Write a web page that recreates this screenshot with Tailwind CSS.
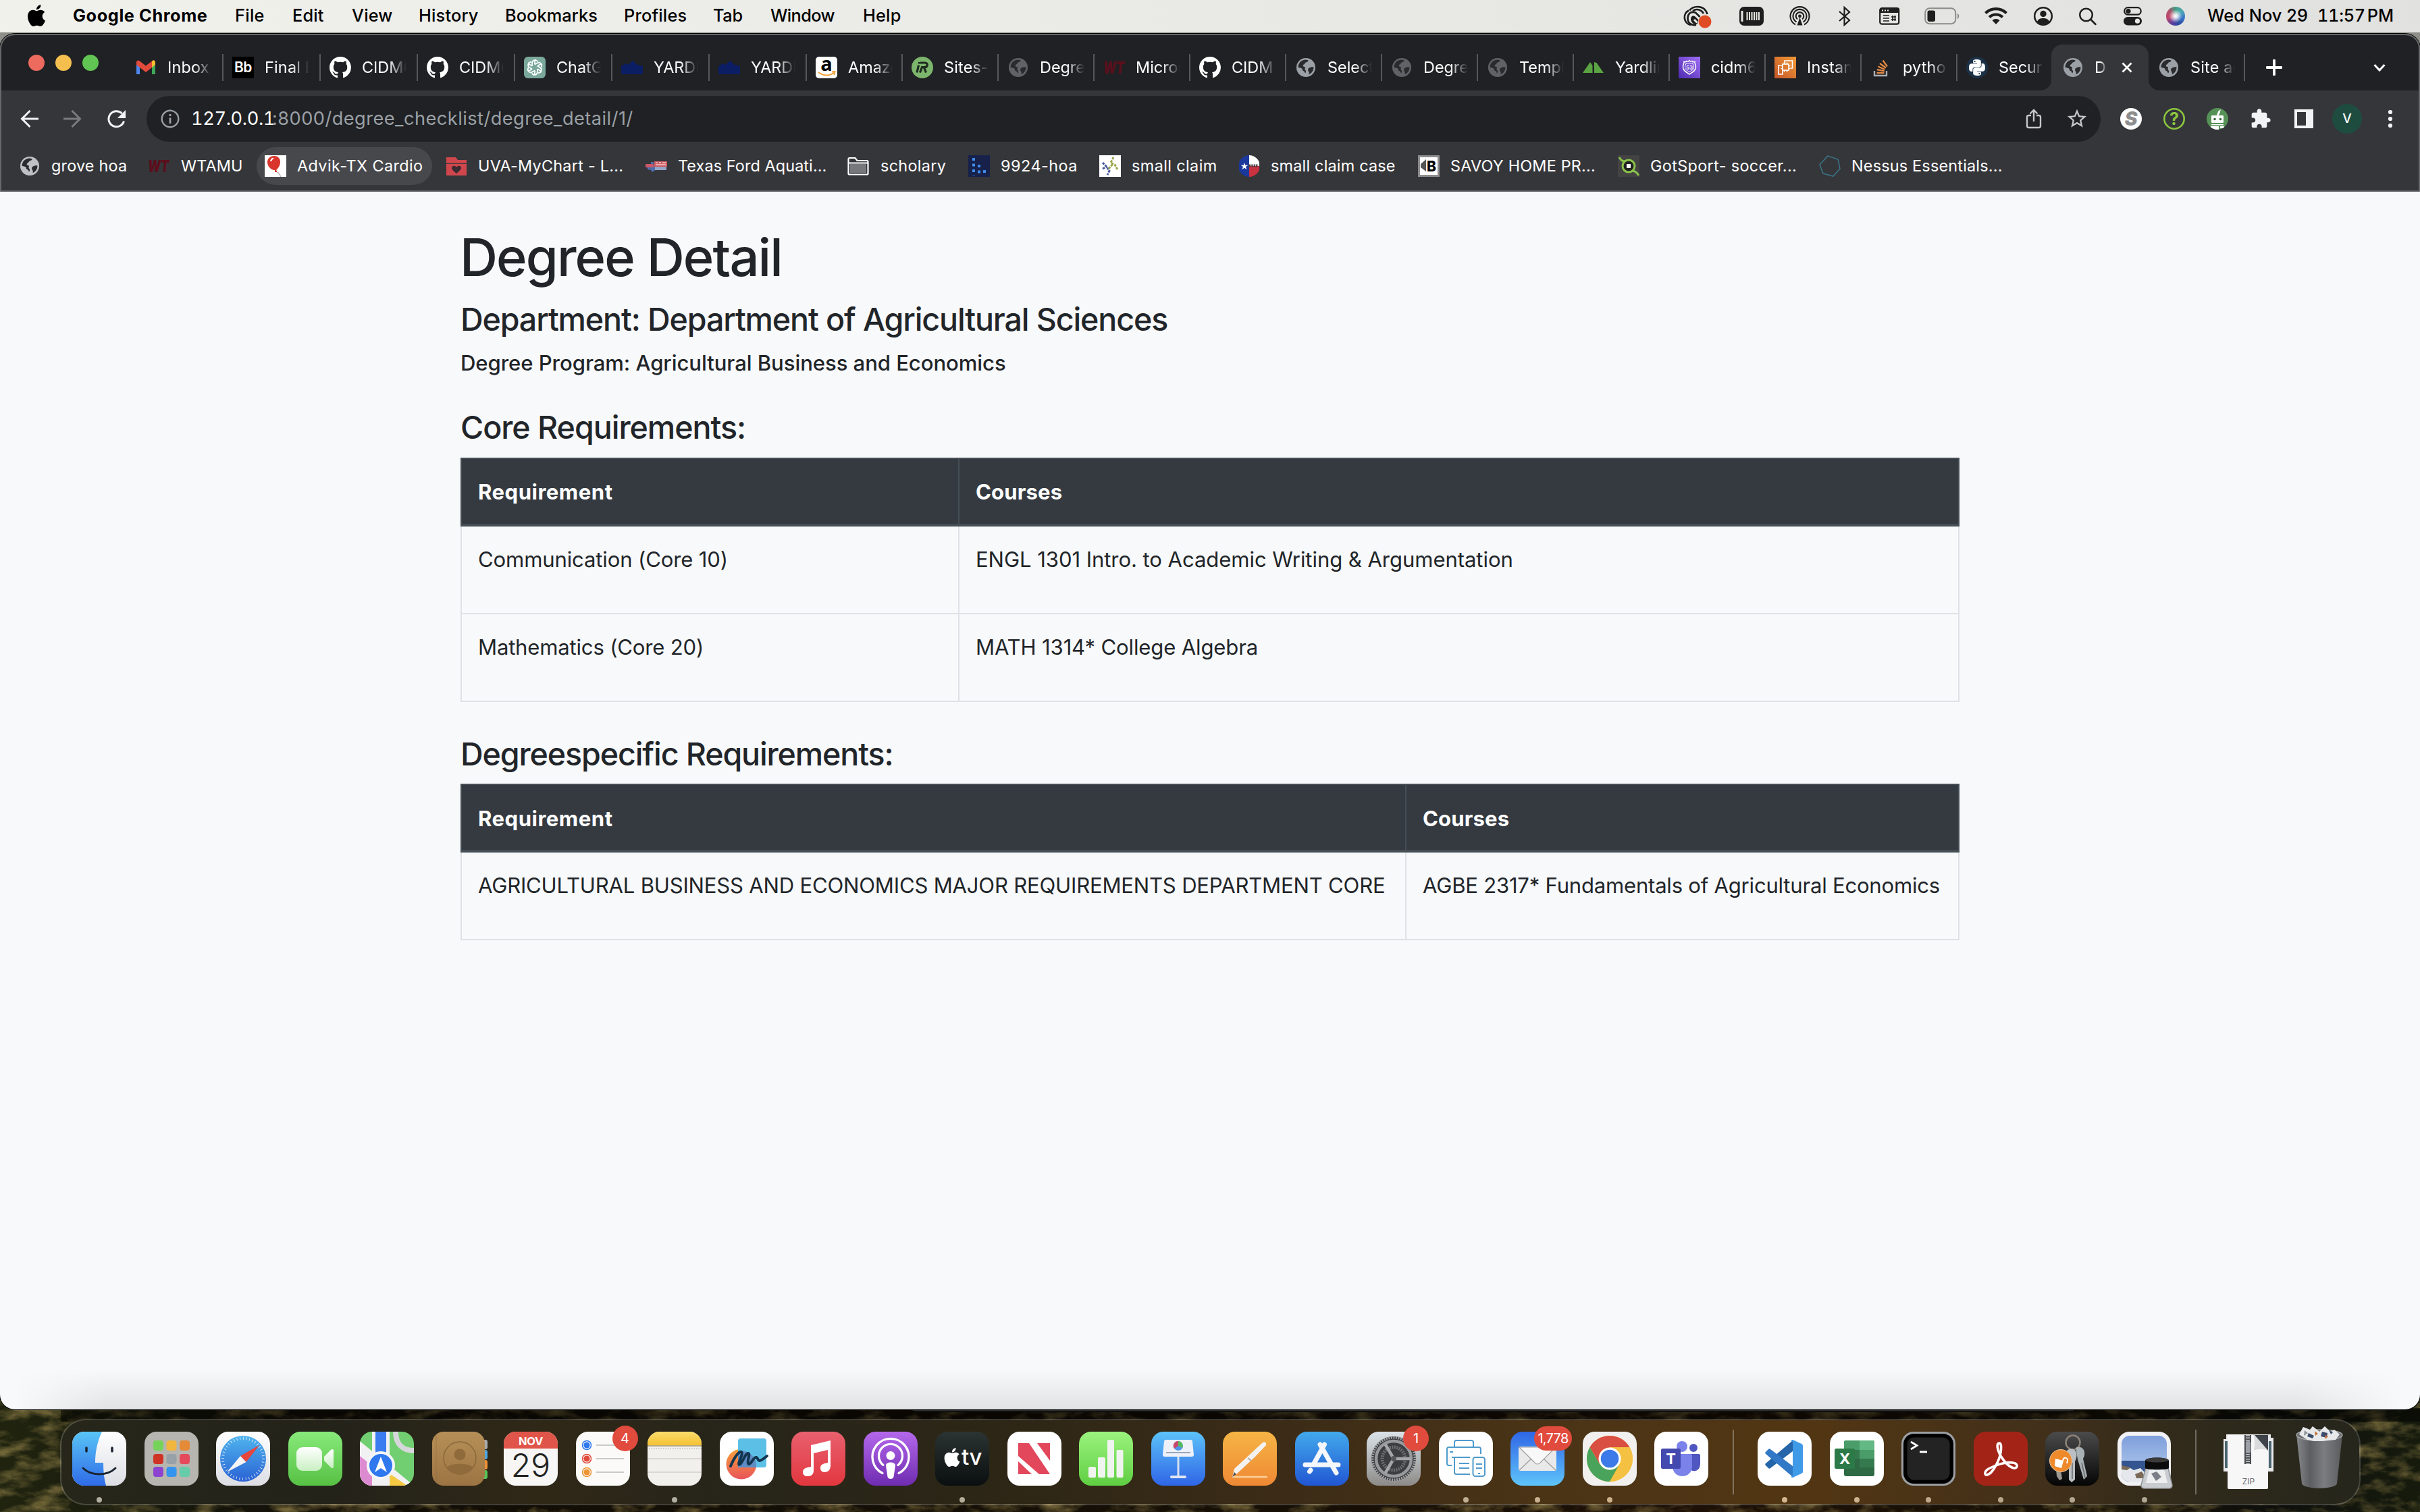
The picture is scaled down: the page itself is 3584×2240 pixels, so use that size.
<!DOCTYPE html>
<html lang="en">
<head>
<meta charset="utf-8">
<title>Degree Detail</title>
<script src="https://cdn.jsdelivr.net/npm/@tailwindcss/browser@4"></script>
</head>
<body class="relative h-[2240px] w-[3584px] overflow-hidden bg-[#0e0c06] font-['Inter',sans-serif] antialiased">

<!-- shared symbols -->
<svg class="absolute size-0">
  <defs>
    <symbol id="globe" viewBox="0 0 32 32"><circle cx="16" cy="16" r="14" fill="currentColor"/><path class="fill-[#2a2b2e]" d="M4.6 16C4.400 9.600 9.400 4.700 15.500 4.600c1.600 0 3 .3 4.100.9-.3 2.300-2.200 2-3.800 3-1.400.8-1.100 2.400-3 3.100-1.300.5-1.500 2.600 0 3.200 1 .4 1.900.2 2.200 1.200.2 1-.9 1.700-.4 3 .4 1 1.600 1.200 1.500 3 0 1.300-.6 2-1.200 2.600-.6-1.300-.4-2.300-1.700-3.200-1.500-1-2.500-1-2.500-3 0-1.600-4-2-6.100-2.400zM21 16.500c2-.9 4.600-1.500 6.500-1 0 5-2.800 9-7 10.800.4-2 .5-3-.5-4.400-1.400-1.900-1.300-4.300 1-5.400z"/></symbol>
    <symbol id="github" viewBox="0 0 16 16"><path fill="#fff" d="M8 0C3.580 0 0 3.580 0 8c0 3.540 2.290 6.530 5.470 7.590.4.070.55-.17.55-.38 0-.19-.01-.82-.01-1.490-2.010.37-2.530-.49-2.690-.94-.09-.23-.48-.94-.82-1.130-.28-.15-.68-.52-.01-.53.63-.01 1.080.58 1.230.82.72 1.210 1.870.87 2.330.66.070-.52.28-.87.51-1.070-1.780-.2-3.640-.89-3.640-3.950 0-.87.31-1.590.82-2.150-.08-.2-.36-1.020.08-2.120 0 0 .67-.21 2.200.82.64-.18 1.320-.27 2-.27s1.360.09 2 .27c1.530-1.040 2.200-.82 2.200-.82.44 1.100.16 1.920.08 2.120.51.56.82 1.270.82 2.150 0 3.070-1.870 3.750-3.650 3.950.29.25.54.73.54 1.480 0 1.070-.01 1.930-.01 2.200 0 .21.15.46.55.38A8.010 8.010 0 0 0 16 8c0-4.420-3.580-8-8-8z"/></symbol>
    <symbol id="wt" viewBox="0 0 32 32"><text x="0" y="25" font-size="25" font-weight="900" font-style="italic" fill="#5a0f1c" textLength="31" lengthAdjust="spacingAndGlyphs" font-family="Inter">WT</text></symbol>
    <symbol id="yard" viewBox="0 0 32 32"><path d="M0 12l7-4 3 2 7-6 7 6 8 2v12H0z" fill="#0b1d63" transform="translate(0 2)"/></symbol>
    <symbol id="apple" viewBox="0 0 24 24"><path fill="currentColor" d="M12.152 6.896c-.948 0-2.415-1.078-3.960-1.040-2.040.027-3.910 1.183-4.961 3.014-2.117 3.675-.546 9.103 1.519 12.090 1.013 1.454 2.208 3.090 3.792 3.039 1.520-.065 2.090-.987 3.935-.987 1.831 0 2.350.987 3.960.948 1.637-.026 2.676-1.480 3.676-2.948 1.156-1.688 1.636-3.325 1.662-3.415-.039-.013-3.182-1.221-3.220-4.857-.026-3.040 2.480-4.494 2.597-4.559-1.429-2.090-3.623-2.324-4.390-2.376-2-.156-3.675 1.090-4.610 1.090zM15.530 3.830c.843-1.012 1.400-2.427 1.245-3.830-1.207.052-2.662.805-3.532 1.818-.78.896-1.454 2.338-1.273 3.714 1.338.104 2.715-.688 3.559-1.701"/></symbol>
    <symbol id="pyhalf" viewBox="0 0 24 24"><path fill="#fff" d="M14.250.18l.9.2.73.26.59.3.45.32.34.34.25.34.16.33.1.3.04.26.02.2-.01.13V8.500l-.05.63-.13.55-.21.46-.26.38-.3.31-.33.25-.35.19-.35.14-.33.1-.3.07-.26.04-.21.02H8.770l-.69.05-.59.14-.5.22-.41.27-.33.32-.27.35-.2.36-.15.37-.1.35-.07.32-.04.27-.02.21v3.060H3.170l-.21-.03-.28-.07-.32-.12-.35-.18-.36-.26-.36-.36-.35-.46-.32-.59-.28-.73-.21-.88-.14-1.050-.05-1.230.06-1.220.16-1.040.24-.87.32-.71.36-.57.4-.44.42-.33.42-.24.4-.16.36-.1.32-.05.24-.01h.16l.06.01h8.160v-.83H6.180l-.01-2.750-.02-.37.05-.34.11-.31.17-.28.25-.26.31-.23.38-.2.44-.18.51-.15.58-.12.64-.1.71-.06.77-.04.84-.02 1.270.05zm-6.300 1.980l-.23.33-.08.41.08.41.23.34.33.22.41.09.41-.09.33-.22.23-.34.08-.41-.08-.41-.23-.33-.33-.22-.41-.09-.41.09z"/></symbol>
    <filter id="grain" x="0" y="0" width="100%" height="100%"><feTurbulence type="fractalNoise" baseFrequency="0.022 0.050" numOctaves="5" seed="11"/><feColorMatrix values="0 0 0 0 0.36  0 0 0 0 0.27  0 0 0 0 0.08  2.200 0 0 0 -0.950"/></filter>
    <linearGradient id="gWall"><stop stop-color="#20240f"/><stop offset=".09" stop-color="#15150b"/><stop offset=".14" stop-color="#120e06"/><stop offset=".5" stop-color="#150f06"/><stop offset=".7" stop-color="#1d1006"/><stop offset=".88" stop-color="#171207"/><stop offset=".94" stop-color="#0e0f0c"/><stop offset="1" stop-color="#161b0d"/></linearGradient>
    <linearGradient id="gFinder" x2="0" y2="1"><stop stop-color="#59c4f6"/><stop offset="1" stop-color="#2f6be8"/></linearGradient>
    <linearGradient id="gWhite" x2="0" y2="1"><stop stop-color="#fff"/><stop offset="1" stop-color="#dcdee4"/></linearGradient>
    <linearGradient id="gSafari" x2="0" y2="1"><stop stop-color="#4fb4ee"/><stop offset="1" stop-color="#2a62d4"/></linearGradient>
    <linearGradient id="gGreen" x2="0" y2="1"><stop stop-color="#87e97a"/><stop offset="1" stop-color="#57c144"/></linearGradient>
    <linearGradient id="gNum" x2="0" y2="1"><stop stop-color="#9bf37e"/><stop offset="1" stop-color="#5fce42"/></linearGradient>
    <linearGradient id="gCam" x2="0" y2="1"><stop stop-color="#fff"/><stop offset="1" stop-color="#c9efc2"/></linearGradient>
    <linearGradient id="gBrown" x2="0" y2="1"><stop stop-color="#b68f57"/><stop offset="1" stop-color="#9c7443"/></linearGradient>
    <linearGradient id="gRed" x2="0" y2="1"><stop stop-color="#e8606e"/><stop offset="1" stop-color="#e2373f"/></linearGradient>
    <linearGradient id="gPod" x2="0" y2="1"><stop stop-color="#b468ec"/><stop offset="1" stop-color="#6f2cb0"/></linearGradient>
    <linearGradient id="gKey" x2="0" y2="1"><stop stop-color="#5cc2fa"/><stop offset="1" stop-color="#2f65e6"/></linearGradient>
    <linearGradient id="gPages" x2="0" y2="1"><stop stop-color="#f6b545"/><stop offset="1" stop-color="#ef8834"/></linearGradient>
    <linearGradient id="gStore" x2="0" y2="1"><stop stop-color="#42a9ec"/><stop offset="1" stop-color="#2156d3"/></linearGradient>
    <linearGradient id="gSet" x2="0" y2="1"><stop stop-color="#dbe3e8"/><stop offset="1" stop-color="#8d8b89"/></linearGradient>
    <linearGradient id="gMail" x2="0" y2="1"><stop stop-color="#2f66e6"/><stop offset="1" stop-color="#5fc4fa"/></linearGradient>
    <linearGradient id="gNote" x2="0" y2="1"><stop stop-color="#fbdc6c"/><stop offset="1" stop-color="#f5c233"/></linearGradient>
    <linearGradient id="gDark" x2="0" y2="1"><stop stop-color="#4b4b4c"/><stop offset="1" stop-color="#050505"/></linearGradient>
    <linearGradient id="gCan"><stop stop-color="#85878a"/><stop offset=".3" stop-color="#5c5e61"/><stop offset=".6" stop-color="#7b7d80"/><stop offset="1" stop-color="#5a5b5d"/></linearGradient>
    <linearGradient id="gSky" x2="0" y2="1"><stop stop-color="#7f9fdb"/><stop offset="1" stop-color="#b9d0f0"/></linearGradient>
    <linearGradient id="gShield" x1="0" y1="1" x2="1" y2="0"><stop stop-color="#4d2bb0"/><stop offset="1" stop-color="#9f6df5"/></linearGradient>
    <linearGradient id="gChip" x1="0" y1="1" x2="1" y2="0"><stop stop-color="#c4562b"/><stop offset="1" stop-color="#f29a36"/></linearGradient>
    <linearGradient id="gFree" x2="0" y2="1"><stop stop-color="#f6a13a"/><stop offset="1" stop-color="#e9545a"/></linearGradient>
    <clipPath id="sq"><rect width="80" height="80" rx="18"/></clipPath>
    <clipPath id="disc"><circle cx="16" cy="16" r="16"/></clipPath>
  </defs>
</svg>

<!-- wallpaper strip visible around the dock -->
<svg class="absolute left-0 top-[2060px]" width="3584" height="180">
  <rect width="3584" height="180" fill="url(#gWall)"/>
  <rect width="3584" height="180" filter="url(#grain)" opacity=".75"/>
  <rect x="90" y="26" width="3494" height="20" fill="#000" opacity=".5"/>
</svg>
<div class="absolute left-0 top-[40px] h-[60px] w-full bg-[#8e8f88]"></div>
<div class="absolute left-[1342px] top-[2070px] h-[22px] w-[1738px] rounded-b-[16px] border-b border-black bg-[#2b2b2b]"></div>

<div class="relative flex h-full flex-col">

  <!-- menu bar -->
  <header class="flex h-12 items-start bg-linear-to-r from-[#f1f1ec] to-[#e1e1df]">
    <div class="flex h-[46px] w-full items-center text-[25.3px] font-medium text-black">
      <svg class="ml-[38px] h-8 w-8"><use href="#apple"/></svg>
      <span class="ml-[38px] w-[240px] font-bold tracking-[0.6px]">Google Chrome</span>
      <span class="w-[85px] tracking-[0.3px]">File</span>
      <span class="w-[88px] tracking-[0.2px]">Edit</span>
      <span class="w-[99px] tracking-[0.2px]">View</span>
      <span class="w-[128px] tracking-[0.2px]">History</span>
      <span class="w-[176px] tracking-[0.1px]">Bookmarks</span>
      <span class="w-[132px] tracking-[0.2px]">Profiles</span>
      <span class="w-[85px] tracking-[-0.3px]">Tab</span>
      <span class="w-[137px] tracking-[-0.6px]">Window</span>
      <span class="tracking-[0.2px]">Help</span>
      <svg class="absolute left-[2492px] top-[6px]" width="44" height="38" viewBox="0 0 44 38"><g fill="none" stroke="#1e1e1e" stroke-width="2.700"><path d="M12 31a11.500 11.500 0 0 1-3-21.500M10 9.500C13 5.500 17 4 22 4c7 0 12.500 4 14.500 11"/><path d="M20 31c-7 1-12.500-3-12.500-9.500C7.500 13 14 10 19.500 13l6 6"/><path d="M15 10c6-4 13-1.500 16 4"/></g><path d="M12 22c0-4 3.500-6 6.500-3.500l5 5-2 6.500c-5 1-9.500-3-9.500-8z" fill="#1e1e1e"/><path d="M17 23l4.500 4.500" stroke="#e8e8e3" stroke-width="3"/><circle cx="33" cy="26" r="9.500" fill="#e04c23"/></svg>
      <svg class="absolute left-[2576px] top-[10px]" width="36" height="28"><rect width="36" height="28" rx="7" fill="#1e1e1e"/><path d="M4 6v16" stroke="#e8e8e3" stroke-width="3"/><path d="M11.500 8v12M15 8v12M18.500 8v12M22 8v12M25.500 8v12M29 8v12" stroke="#e8e8e3" stroke-width="2"/></svg>
      <svg class="absolute left-[2650px] top-[9px]" width="31" height="30" fill="none" stroke="#1e1e1e" stroke-width="2.100"><path d="M9 27.500a14 14 0 1 1 13 0M10.500 23.500a10 10 0 1 1 10 0M12 19.500a5.800 5.800 0 1 1 7 0"/><circle cx="15.500" cy="15" r="2.400" fill="#1e1e1e" stroke="none"/><path d="M15.500 17l-4 11.500h8z" fill="#1e1e1e" stroke="none"/></svg>
      <svg class="absolute left-[2722px] top-[9px]" width="20" height="30" fill="none" stroke="#1e1e1e" stroke-width="2.200"><path d="M2 8l15 13-7.500 7V2L17 9 2 22"/></svg>
      <svg class="absolute left-[2783px] top-[11px]" width="31" height="26"><rect x="1.200" y="1.200" width="28" height="23.500" rx="3" fill="none" stroke="#1e1e1e" stroke-width="2.200"/><path d="M1 3a2 2 0 0 1 2-2h25a2 2 0 0 1 2 2v5H1z" fill="#1e1e1e"/><path d="M6 12h9M6 16h9M6 20h9M18 14h7M18 18h7M20 12v8M23.500 12v8" stroke="#1e1e1e" stroke-width="1.700"/><path d="M4 4.500h2M8 4.500h2M12 4.500h2" stroke="#e8e8e3" stroke-width="2"/></svg>
      <svg class="absolute left-[2850px] top-[11px]" width="54" height="26"><rect x="1.200" y="1.200" width="45" height="23" rx="6.500" fill="none" stroke="#8b8b88" stroke-width="2"/><rect x="4.500" y="4.500" width="11.500" height="16.500" rx="3" fill="#1e1e1e"/><path d="M49 9v8c3-1 3-7 0-8z" fill="#8b8b88"/></svg>
      <svg class="absolute left-[2938px] top-[10px]" width="36" height="27" fill="none" stroke="#1e1e1e" stroke-width="4.200"><path d="M2.500 9.500a22 22 0 0 1 31 0M8.200 15.500a14 14 0 0 1 19.600 0"/><path d="M18 26l-5.500-5.800a8 8 0 0 1 11 0z" fill="#1e1e1e" stroke="none"/></svg>
      <svg class="absolute left-[3011px] top-[9px]" width="30" height="30"><circle cx="15" cy="15" r="12.800" fill="none" stroke="#1e1e1e" stroke-width="2.500"/><circle cx="15" cy="11.500" r="4.700" fill="#1e1e1e"/><path d="M6 23c1.500-4 5-5 9-5s7.500 1 9 5a12 12 0 0 1-18 0z" fill="#1e1e1e"/></svg>
      <svg class="absolute left-[3078px] top-[11px]" width="28" height="28" fill="none" stroke="#1e1e1e" stroke-width="2.500" stroke-linecap="round"><circle cx="11.500" cy="11" r="9.300"/><path d="M18.500 18l7 7"/></svg>
      <svg class="absolute left-[3145px] top-[10px]" width="27" height="28"><rect x="1.200" y="1.200" width="24.500" height="10.500" rx="5.200" fill="none" stroke="#1e1e1e" stroke-width="2.200"/><circle cx="7" cy="6.500" r="3.600" fill="#1e1e1e"/><rect y="15" width="27" height="12.500" rx="6.200" fill="#1e1e1e"/><circle cx="20.500" cy="21.200" r="3.600" fill="#e8e8e3"/></svg>
      <div class="absolute left-[3208px] top-[10px] size-[28px] rounded-full bg-[radial-gradient(circle_at_50%_50%,#fff_0,#ffffffcc_15%,transparent_50%),conic-gradient(#3f9e82,#4fa8b4,#3a78c8,#2a4ba0,#5a3fa0,#c0456a,#b0506a,#3f9e82)]"></div>
      <span class="absolute left-[3269px] tracking-[0.1px]">Wed Nov 29</span>
      <span class="absolute left-[3432px] tracking-[-0.3px] tabular-nums">11:57<span class="pl-[3px] tracking-normal">PM</span></span>
    </div>
  </header>

  <!-- browser window -->
  <main class="relative mt-[2px] flex h-[2038px] flex-col overflow-hidden rounded-[22px] bg-[#f8f9fb] shadow-[0_0_0_1px_#000]">

    <!-- tab strip -->
    <div class="flex h-[84px] items-end bg-[#202124] text-[23.4px] text-white">
      <div class="flex h-[68px] w-[187px] items-start gap-[16px] pl-[42px] pt-[15px]">
        <i class="size-[24px] rounded-full bg-[#ec6a5e]"></i><i class="size-[24px] rounded-full bg-[#f4bf4f]"></i><i class="size-[24px] rounded-full bg-[#61c554]"></i>
      </div>
      <div class="flex h-[68px] w-[144px] items-center pl-[13px]">
        <svg class="size-8 shrink-0" viewBox="0 0 32 32"><path d="M2 26V8l5 4v14z" fill="#4c86ee"/><path d="M30 26V8l-5 4v14z" fill="#3fa757"/><path d="M2 8.500c0-3 3-4 5-2l9 7 9-7V16l-9 7-9-7-5-4z" fill="#e24a3c"/><path d="M25 6.500c3-2.500 5-.5 5 2V12l-5 4z" fill="#f5bd2f"/></svg>
        <span class="ml-4 w-[66px] overflow-hidden whitespace-nowrap [mask-image:linear-gradient(to_right,#000_60%,transparent)] tracking-[0.2px]">Inbox (4)</span><i class="ml-auto h-10 w-[2px] bg-[#55575b]"></i></div>
      <div class="flex h-[68px] w-[144px] items-center pl-[13px]">
        <div class="flex size-8 shrink-0 items-center justify-center bg-black text-[21px] font-semibold tracking-[-0.5px]">Bb</div>
        <span class="ml-4 w-[66px] overflow-hidden whitespace-nowrap [mask-image:linear-gradient(to_right,#000_60%,transparent)] tracking-[0.2px]">Final E</span><i class="ml-auto h-10 w-[2px] bg-[#55575b]"></i></div>
      <div class="flex h-[68px] w-[144px] items-center pl-[13px]"><svg class="size-8 shrink-0"><use href="#github"/></svg>
        <span class="ml-4 w-[66px] overflow-hidden whitespace-nowrap [mask-image:linear-gradient(to_right,#000_60%,transparent)]">CIDM6</span><i class="ml-auto h-10 w-[2px] bg-[#55575b]"></i></div>
      <div class="flex h-[68px] w-[144px] items-center pl-[13px]"><svg class="size-8 shrink-0"><use href="#github"/></svg>
        <span class="ml-4 w-[66px] overflow-hidden whitespace-nowrap [mask-image:linear-gradient(to_right,#000_60%,transparent)]">CIDM6</span><i class="ml-auto h-10 w-[2px] bg-[#55575b]"></i></div>
      <div class="flex h-[68px] w-[144px] items-center pl-[13px]">
        <svg class="size-8 shrink-0" viewBox="0 0 32 32"><rect width="32" height="32" rx="6" fill="#7aa99c"/><g fill="none" stroke="#fff" stroke-width="1.700"><path id="lp" d="M16 11.500l4-2.300c4-2 8 2.500 5.500 6.500M16 11.500v-4.500c0-1.500 1-2 2-2.500"/><use href="#lp" transform="rotate(60 16 16)"/><use href="#lp" transform="rotate(120 16 16)"/><use href="#lp" transform="rotate(180 16 16)"/><use href="#lp" transform="rotate(240 16 16)"/><use href="#lp" transform="rotate(300 16 16)"/></g></svg>
        <span class="ml-4 w-[66px] overflow-hidden whitespace-nowrap [mask-image:linear-gradient(to_right,#000_60%,transparent)]">ChatG</span><i class="ml-auto h-10 w-[2px] bg-[#55575b]"></i></div>
      <div class="flex h-[68px] w-[144px] items-center pl-[13px]"><svg class="size-8 shrink-0"><use href="#yard"/></svg>
        <span class="ml-4 w-[66px] overflow-hidden whitespace-nowrap [mask-image:linear-gradient(to_right,#000_60%,transparent)]">YARDI</span><i class="ml-auto h-10 w-[2px] bg-[#55575b]"></i></div>
      <div class="flex h-[68px] w-[144px] items-center pl-[13px]"><svg class="size-8 shrink-0"><use href="#yard"/></svg>
        <span class="ml-4 w-[66px] overflow-hidden whitespace-nowrap [mask-image:linear-gradient(to_right,#000_60%,transparent)]">YARDI</span><i class="ml-auto h-10 w-[2px] bg-[#55575b]"></i></div>
      <div class="flex h-[68px] w-[142px] items-center pl-[13px]">
        <svg class="size-8 shrink-0" viewBox="0 0 32 32"><rect width="32" height="32" rx="5" fill="#fff"/><text x="16" y="21" text-anchor="middle" font-size="29" font-weight="700" font-family="Open Sans">a</text><path d="M4 23c7 5.500 16 6 23 1M24 22.500l4.500-.5-1 5" fill="none" stroke="#f2a33a" stroke-width="2"/></svg>
        <span class="ml-4 w-[66px] overflow-hidden whitespace-nowrap [mask-image:linear-gradient(to_right,#000_60%,transparent)]">Amazo</span><i class="ml-auto h-10 w-[2px] bg-[#55575b]"></i></div>
      <div class="flex h-[68px] w-[142px] items-center pl-[13px]">
        <svg class="size-8 shrink-0" viewBox="0 0 32 32"><circle cx="16" cy="16" r="16" fill="#7cb66c"/><path d="M8 23.500l2.500-11M11 10.500l.5-2.500M12.500 9H20c5 0 4 6.500-.5 6.500h-4l-3 8M18.500 16l3 7.500" fill="none" stroke="#1f2a20" stroke-width="3.200"/></svg>
        <span class="ml-4 w-[66px] overflow-hidden whitespace-nowrap [mask-image:linear-gradient(to_right,#000_60%,transparent)] tracking-[0.2px]">Sites-</span><i class="ml-auto h-10 w-[2px] bg-[#55575b]"></i></div>
      <div class="flex h-[68px] w-[142px] items-center pl-[13px]"><svg class="size-8 shrink-0 text-[#5f6368]"><use href="#globe"/></svg>
        <span class="ml-4 w-[66px] overflow-hidden whitespace-nowrap [mask-image:linear-gradient(to_right,#000_60%,transparent)]">Degree</span><i class="ml-auto h-10 w-[2px] bg-[#55575b]"></i></div>
      <div class="flex h-[68px] w-[142px] items-center pl-[13px]"><svg class="size-8 shrink-0"><use href="#wt"/></svg>
        <span class="ml-4 w-[66px] overflow-hidden whitespace-nowrap [mask-image:linear-gradient(to_right,#000_60%,transparent)]">Micros</span><i class="ml-auto h-10 w-[2px] bg-[#55575b]"></i></div>
      <div class="flex h-[68px] w-[142px] items-center pl-[13px]"><svg class="size-8 shrink-0"><use href="#github"/></svg>
        <span class="ml-4 w-[66px] overflow-hidden whitespace-nowrap [mask-image:linear-gradient(to_right,#000_60%,transparent)]">CIDM</span><i class="ml-auto h-10 w-[2px] bg-[#55575b]"></i></div>
      <div class="flex h-[68px] w-[142px] items-center pl-[13px]"><svg class="size-8 shrink-0 text-[#9aa0a6]"><use href="#globe"/></svg>
        <span class="ml-4 w-[66px] overflow-hidden whitespace-nowrap [mask-image:linear-gradient(to_right,#000_60%,transparent)]">Select</span><i class="ml-auto h-10 w-[2px] bg-[#55575b]"></i></div>
      <div class="flex h-[68px] w-[142px] items-center pl-[13px]"><svg class="size-8 shrink-0 text-[#5f6368]"><use href="#globe"/></svg>
        <span class="ml-4 w-[66px] overflow-hidden whitespace-nowrap [mask-image:linear-gradient(to_right,#000_60%,transparent)]">Degree</span><i class="ml-auto h-10 w-[2px] bg-[#55575b]"></i></div>
      <div class="flex h-[68px] w-[142px] items-center pl-[13px]"><svg class="size-8 shrink-0 text-[#5f6368]"><use href="#globe"/></svg>
        <span class="ml-4 w-[66px] overflow-hidden whitespace-nowrap [mask-image:linear-gradient(to_right,#000_60%,transparent)]">Templ</span><i class="ml-auto h-10 w-[2px] bg-[#55575b]"></i></div>
      <div class="flex h-[68px] w-[142px] items-center pl-[13px]"><svg class="size-8 shrink-0" viewBox="0 0 32 32"><path d="M0 24L11 8l3.500 5V24zM17 24V8l3.500 1L31 24z" fill="#5aa443"/></svg>
        <span class="ml-4 w-[66px] overflow-hidden whitespace-nowrap [mask-image:linear-gradient(to_right,#000_60%,transparent)]">Yardlin</span><i class="ml-auto h-10 w-[2px] bg-[#55575b]"></i></div>
      <div class="flex h-[68px] w-[142px] items-center pl-[13px]"><svg class="size-8 shrink-0" viewBox="0 0 32 32"><rect width="32" height="32" fill="url(#gShield)"/><g fill="none" stroke="#fff" stroke-width="1.500"><path d="M8 7.500c2 .8 3 .5 4-1 1.500 1 2.500 1 4-1 1.500 2 2.500 2 4 1 1 1.500 2 1.800 4 1-.5 2 1.500 4 1.500 8 0 5-5 7.500-9.500 10.500C11.500 23 6.500 20.500 6.500 15.500c0-4 2-6 1.500-8z"/><path d="M11 9.500h10c0 2 1.500 3 1.500 6 0 4-3.500 5-6.500 7.500-3-2.500-6.500-3.500-6.500-7.500 0-3 1.500-4 1.500-6z" stroke-width="1"/></g><text x="16" y="19" text-anchor="middle" font-size="8" font-weight="600" fill="#fff" font-family="Inter">53</text></svg>
        <span class="ml-4 w-[66px] overflow-hidden whitespace-nowrap [mask-image:linear-gradient(to_right,#000_60%,transparent)]">cidm6</span><i class="ml-auto h-10 w-[2px] bg-[#55575b]"></i></div>
      <div class="flex h-[68px] w-[142px] items-center pl-[13px]"><svg class="size-8 shrink-0" viewBox="0 0 32 32"><rect width="32" height="32" fill="url(#gChip)"/><g fill="none" stroke="#fff" stroke-width="1.600"><path d="M12 19v7H6V13h3M15 9V6h11.500v11h-3"/><rect x="12" y="11" width="9" height="9"/><path d="M14.500 11V8.500M18.500 11V8.500M14.500 20v2.500M18.500 20v2.500M12 13.500H9.500M12 17.500H9.500M21 13.500h2.500M21 17.500h2.500"/></g></svg>
        <span class="ml-4 w-[66px] overflow-hidden whitespace-nowrap [mask-image:linear-gradient(to_right,#000_60%,transparent)] tracking-[0.2px]">Instan</span><i class="ml-auto h-10 w-[2px] bg-[#55575b]"></i></div>
      <div class="flex h-[68px] w-[142px] items-center pl-[13px]"><svg class="size-8 shrink-0" viewBox="0 0 32 32" fill="none"><path d="M6 21v7h18v-7" stroke="#a9adb2" stroke-width="2.400"/><path d="M9.500 24h11M9.800 19.200l11 2M11.300 14.500l10 4.200M14 10l9 6.500M18.500 5.500l6.500 9" stroke="#e58a45" stroke-width="2.300"/></svg>
        <span class="ml-4 w-[66px] overflow-hidden whitespace-nowrap [mask-image:linear-gradient(to_right,#000_60%,transparent)] tracking-[0.2px]">python</span><i class="ml-auto h-10 w-[2px] bg-[#55575b]"></i></div>
      <div class="flex h-[68px] w-[142px] items-center pl-[13px]"><svg class="size-8 shrink-0" viewBox="0 0 32 32"><circle cx="16" cy="16" r="16" fill="#1c3145"/><use href="#pyhalf" x="4" y="4" width="24" height="24"/><use href="#pyhalf" x="4" y="4" width="24" height="24" transform="rotate(180 16 16)"/></svg>
        <span class="ml-4 w-[66px] overflow-hidden whitespace-nowrap [mask-image:linear-gradient(to_right,#000_60%,transparent)]">Securi</span></div>
      <div class="relative -ml-[3px] flex h-[68px] w-[144px] items-center rounded-t-[16px] bg-[#35363a] pl-4">
        <svg class="absolute -left-[16px] bottom-0 size-4 text-[#35363a]" viewBox="0 0 16 16"><path d="M16 0v16H0A16 16 0 0 0 16 0z" fill="currentColor"/></svg>
        <svg class="absolute -right-[16px] bottom-0 size-4 text-[#35363a]" viewBox="0 0 16 16"><path d="M0 0v16h16A16 16 0 0 1 0 0z" fill="currentColor"/></svg>
        <svg class="size-8 shrink-0 text-[#9aa0a6]"><use href="#globe"/></svg>
        <span class="ml-4 w-[18px] overflow-hidden whitespace-nowrap [mask-image:linear-gradient(to_right,#000_50%,transparent)]">De</span>
        <svg class="ml-[21px] size-[18px]" viewBox="0 0 18 18"><path d="M2.500 2.500l13 13M15.500 2.500l-13 13" stroke="#fff" stroke-width="2.800"/></svg>
      </div>
      <div class="flex h-[68px] w-[143px] items-center pl-[14px]"><svg class="size-8 shrink-0 text-[#9aa0a6]"><use href="#globe"/></svg>
        <span class="ml-4 w-[66px] overflow-hidden whitespace-nowrap [mask-image:linear-gradient(to_right,#000_60%,transparent)] tracking-[0.2px]">Site ad</span><i class="ml-auto h-10 w-[2px] bg-[#55575b]"></i></div>
      <svg class="mb-[22px] ml-[31px] size-6" viewBox="0 0 24 24"><path d="M12 1.500v21M1.500 12h21" stroke="#fff" stroke-width="3.800" stroke-linecap="round"/></svg>
      <svg class="mb-[26px] ml-auto mr-[50px] h-4 w-5" viewBox="0 0 20 16"><path d="M2.500 4l7.500 8 7.500-8" fill="none" stroke="#fff" stroke-width="3"/></svg>
    </div>

    <!-- toolbar -->
    <div class="flex h-[76px] items-end bg-[#35363a]">
      <div class="flex h-[68px] w-full items-center">
        <svg class="ml-[28px] size-8" viewBox="0 0 32 32" fill="none" stroke="#f1f3f4" stroke-width="3"><path d="M29 16H5M16.500 4L4.500 16l12 12"/></svg>
        <svg class="ml-[31px] size-8" viewBox="0 0 32 32" fill="none" stroke="#797b7f" stroke-width="3"><path d="M3 16h24M15.500 4l12 12-12 12"/></svg>
        <svg class="ml-[33px] size-8" viewBox="0 0 32 32" fill="none"><path d="M27.500 19.500A11.500 11.500 0 1 1 24.500 8" stroke="#f1f3f4" stroke-width="3"/><path d="M30 3v12H18z" fill="#f1f3f4"/></svg>
        <div class="ml-[29px] flex h-[68px] w-[2894px] items-center rounded-full bg-[#202124] text-[27.2px] text-[#9aa0a6]">
          <svg class="ml-[21px] size-7" viewBox="0 0 28 28" fill="none" stroke="#9aa0a6" stroke-width="2.400"><circle cx="14" cy="14" r="12.300"/><path d="M14 12.500V21M14 7v3" stroke-width="2.800"/></svg>
          <span class="ml-[17px] w-[120px] tracking-[-0.4px] tabular-nums text-white">127.0.0.1</span><span class="tracking-[0.46px]">:8000/degree_checklist/degree_detail/1/</span>
          <svg class="ml-auto h-[32px] w-[24px]" viewBox="0 0 24 32" fill="none" stroke="#c4c7cb" stroke-width="2.400"><path d="M8 11H4.500a2.500 2.500 0 0 0-2.500 2.500v13A2.500 2.500 0 0 0 4.500 29h15a2.500 2.500 0 0 0 2.500-2.500v-13a2.500 2.500 0 0 0-2.500-2.500H16M12 20V3M6.500 8.500L12 3l5.500 5.500"/></svg>
          <svg class="ml-[35px] mr-[18px] size-[34px]" viewBox="0 0 24 24" fill="#c4c7cb"><path d="M22 9.240l-7.190-.62L12 2 9.190 8.630 2 9.240l5.460 4.730L5.820 21 12 17.270 18.180 21l-1.630-7.030L22 9.240zM12 15.400l-3.760 2.270 1-4.280-3.320-2.880 4.380-.38L12 6.100l1.710 4.040 4.380.38-3.320 2.880 1 4.280L12 15.400z"/></svg>
        </div>
        <svg class="ml-[29px] size-8" viewBox="0 0 32 32"><circle cx="16" cy="16" r="16" fill="#fff"/><text x="16" y="26" text-anchor="middle" font-size="28" font-weight="900" font-style="italic" fill="#8e8e8e" font-family="Inter">S</text></svg>
        <svg class="ml-8 size-8" viewBox="0 0 32 32"><circle cx="16" cy="16" r="14.700" fill="none" stroke="#8cc63f" stroke-width="2.600"/><text x="16" y="25" text-anchor="middle" font-size="25" font-weight="700" fill="#8cc63f" font-family="Inter">?</text></svg>
        <svg class="ml-8 size-8" viewBox="0 0 32 32"><circle cx="16" cy="16" r="16" fill="#569257"/><g clip-path="url(#disc)" fill="#fff"><rect x="7" y="11" width="18" height="11" rx="1"/><path d="M15 11l2-6 4-3-2 7-2 2z"/><path d="M7 24h18v1.500H7zM6 27h12v5H6zM20 27h6v3h-6z"/></g><circle cx="12" cy="16.500" r="1.800" fill="#37683a"/><circle cx="20.500" cy="16.500" r="1.800" fill="#37683a"/></svg>
        <svg class="ml-8 size-8" viewBox="0 0 24 24"><path fill="#f1f3f4" d="M20.500 11H19V7c0-1.100-.9-2-2-2h-4V3.500C13 2.120 11.880 1 10.500 1S8 2.120 8 3.500V5H4c-1.100 0-1.990.9-1.990 2v3.800H3.500c1.490 0 2.700 1.210 2.700 2.700s-1.210 2.700-2.700 2.700H2V20c0 1.100.9 2 2 2h3.800v-1.500c0-1.490 1.210-2.700 2.700-2.700 1.490 0 2.700 1.210 2.700 2.700V22H17c1.100 0 2-.9 2-2v-4h1.500c1.380 0 2.500-1.120 2.500-2.500S21.880 11 20.500 11z"/></svg>
        <svg class="ml-8 size-8" viewBox="0 0 32 32"><path fill="#f1f3f4" fill-rule="evenodd" d="M2 2h28v28H2zM6 6v20h13V6z"/></svg>
        <div class="ml-[26px] flex size-[44px] items-center justify-center rounded-full bg-[#1e4d3f] text-[19px] font-medium text-white">V</div>
        <svg class="ml-[26px] size-8" viewBox="0 0 32 32" fill="#f1f3f4"><circle cx="16" cy="6" r="3.100"/><circle cx="16" cy="16" r="3.100"/><circle cx="16" cy="26" r="3.100"/></svg>
      </div>
    </div>

    <!-- bookmarks bar -->
    <div class="flex h-[74px] items-center border-b-2 border-[#5b5d60] bg-[#35363a] pl-[28px] text-[23.4px] text-white whitespace-nowrap">
      <div class="flex w-[191px] items-center gap-4"><svg class="size-8 text-[#bdc1c6]"><use href="#globe"/></svg><span class="tracking-[0.2px]">grove hoa</span></div>
      <div class="flex w-[161px] items-center gap-[17px]"><svg class="size-8"><use href="#wt"/></svg><span class="tracking-[0.15px]">WTAMU</span></div>
      <div class="mr-5 flex h-14 w-[260px] items-center gap-4 rounded-full bg-[#47484c] pl-3"><svg class="size-8" viewBox="0 0 32 32"><rect width="32" height="32" fill="#fff"/><path d="M14 1c6 0 9 4 9 9 0 6-4 10-6 12l2 3h-4v-3C9 22 4 16 4 10 4 5 8 1 14 1z" fill="#d9352c"/><path d="M9 9c.5-2.500 2-4 4-4.500" stroke="#fff" stroke-width="2" fill="none"/><path d="M18 25c4 1 4 4 6 7" stroke="#c4b6b6" stroke-width="1.500" fill="none"/></svg><span class="tracking-[0.4px]">Advik-TX Cardio</span></div>
      <div class="flex w-[296px] items-center gap-4"><svg class="size-8" viewBox="0 0 32 32"><path d="M1 3h14l3 4h13v5H1zM1 13h30v16a1 1 0 0 1-1 1H2a1 1 0 0 1-1-1z" fill="#cf474d"/><path d="M16 27c-5-4-7-6-7-8.500 0-3 4.500-4 7-1 2.500-3 7-2 7 1 0 2.500-2 4.500-7 8.500z" fill="#3a2b31"/></svg><span class="tracking-[0.25px]">UVA-MyChart - L...</span></div>
      <div class="flex w-[299px] items-center gap-4"><svg class="size-8" viewBox="0 0 32 32"><path d="M0 13h8v-3h4v5l4 1v5l-6 4-3-4-3 1z" fill="#4d6ea8"/><path d="M0 13h12v5H0z" fill="#c9586a"/><path d="M13 9h19v8H13z" fill="#cf5b62"/><path d="M14 17h17v5H14z" fill="#93a5c8"/><path d="M15 11h3M20 11h3M25 11h5M15 14h15" stroke="#f0c9cb" stroke-width="1.500"/></svg><span class="tracking-[0.1px]">Texas Ford Aquati...</span></div>
      <div class="flex w-[179px] items-center gap-[17px]"><svg class="size-8" viewBox="0 0 32 32"><path d="M1.500 27V5.500A1.500 1.500 0 0 1 3 4h8.500l3 4H29a1.500 1.500 0 0 1 1.500 1.500V27a1.500 1.500 0 0 1-1.500 1.500H3A1.500 1.500 0 0 1 1.500 27z" fill="#35363a" stroke="#fff" stroke-width="2.200"/><path d="M4 13h24v13H4z" fill="#77787c"/><path d="M2 11.500h28" stroke="#fff" stroke-width="2.200"/></svg><span class="tracking-[0.3px]">scholary</span></div>
      <div class="flex w-[194px] items-center gap-4"><svg class="size-8" viewBox="0 0 32 32"><rect width="32" height="32" fill="#17214a"/><path d="M8 4v26M16 14v16M24 22v8" stroke="#3e8df0" stroke-width="4" stroke-dasharray="4 4.500"/></svg><span class="tracking-[0.5px]">9924-hoa</span></div>
      <div class="flex w-[206px] items-center gap-4"><svg class="size-8" viewBox="0 0 32 32"><rect width="32" height="32" fill="#fff"/><g fill="none" stroke-width="3" stroke-dasharray="3.500 1.500"><path d="M5 11l6 6 4 6-3 6M5 20l6-3" stroke="#44599a"/><path d="M21 3l-4 8 6 3 4 7M14 20l6-7" stroke="#9aa548"/></g></svg><span class="tracking-[0.4px]">small claim</span></div>
      <div class="flex w-[266px] items-center gap-4"><svg class="size-8" viewBox="0 0 32 32"><g clip-path="url(#disc)"><rect x="1" width="15" height="32" fill="#1b399c"/><rect x="16" width="15" height="16" fill="#fff"/><rect x="16" y="16" width="15" height="16" fill="#c9323f"/></g><path d="M9 11l1.300 3.800h4l-3.200 2.300 1.200 3.900L9 18.700 5.700 21l1.200-3.900-3.200-2.300h4z" fill="#fff"/><path d="M15 15.500h14" stroke="#4a4048" stroke-width="4" stroke-dasharray="2 .7"/></svg><span class="tracking-[0.2px]">small claim case</span></div>
      <div class="flex w-[296px] items-center gap-4"><svg class="size-8" viewBox="0 0 32 32"><rect width="32" height="32" fill="#8e8e8e"/><rect x="3" y="3" width="26" height="26" fill="#fff"/><path d="M4 13l8-7v18l-8-6z" fill="#555"/><text x="13" y="24" font-size="21" font-weight="800" font-family="Inter">B</text></svg><span class="tracking-[0.2px]">SAVOY HOME PR...</span></div>
      <div class="flex w-[298px] items-center gap-4"><svg class="size-8" viewBox="0 0 32 32"><rect width="32" height="32" fill="#434343"/><circle cx="16" cy="16" r="9" fill="#222" stroke="#8bc34a" stroke-width="3"/><rect x="13" y="13" width="6" height="6" fill="#fff"/><path d="M2 3c3 5 5 6 9 6M21 23c4 0 7 2 10 7" fill="none" stroke="#8bc34a" stroke-width="3"/></svg><span class="tracking-[0.35px]">GotSport- soccer...</span></div>
      <div class="flex items-center gap-4"><svg class="size-8" viewBox="0 0 32 32"><path d="M13 1l15 5 3 14-10 11-15-4L1 14z" fill="none" stroke="#3a7384" stroke-width="1.600"/></svg><span class="tracking-[0.2px]">Nessus Essentials...</span></div>
    </div>

    <!-- page -->
    <section class="mx-auto w-[2220px] flex-1 pt-[49px] text-[31.1px] text-[#212529]">
      <h1 class="mb-4 -ml-px h-[95px] text-[77.6px] leading-[96px] font-medium tracking-[-1.9px]">Degree Detail</h1>
      <h4 class="mb-4 h-[57.6px] pt-px text-[46.6px] leading-[57.6px] font-medium tracking-[-1.13px]">Department: Department of Agricultural Sciences</h4>
      <p class="mb-12 h-[38.4px] pt-px leading-[38.4px] font-medium tracking-[-0.07px]">Degree Program: Agricultural Business and Economics</p>
      <h4 class="mb-4 h-[57.6px] pt-px text-[46.6px] leading-[57.6px] font-medium tracking-[-1.03px]">Core Requirements:</h4>
      <table class="mb-12 w-[2220px] table-fixed border-separate border-spacing-0 text-left">
        <thead class="bg-[#343a40] text-white">
          <tr>
            <th class="h-[102px] w-[737px] border-t-2 border-b-4 border-l-2 border-[#454d55] px-6 pt-1 font-bold tracking-[0.5px]">Requirement</th>
            <th class="border-x-2 border-t-2 border-b-4 border-[#454d55] px-6 pt-1 font-bold tracking-[0.1px]">Courses</th>
          </tr>
        </thead>
        <tbody class="leading-[48px]">
          <tr>
            <td class="h-[130px] border-b-2 border-l-2 border-[#dee2e6] px-6 pt-[25px] align-top tracking-[-0.15px]">Communication (Core 10)</td>
            <td class="border-x-2 border-b-2 border-[#dee2e6] px-6 pt-[25px] align-top tracking-[-0.08px]">ENGL 1301 Intro. to Academic Writing &amp; Argumentation</td>
          </tr>
          <tr>
            <td class="h-[130px] border-b-2 border-l-2 border-[#dee2e6] px-6 pt-[25px] align-top tracking-[-0.2px]">Mathematics (Core 20)</td>
            <td class="border-x-2 border-b-2 border-[#dee2e6] px-6 pt-[25px] align-top tracking-[-0.15px]">MATH 1314* College Algebra</td>
          </tr>
        </tbody>
      </table>
      <h4 class="mb-4 h-[57.6px] pt-px text-[46.6px] leading-[57.6px] font-medium tracking-[-1.12px]">Degreespecific Requirements:</h4>
      <table class="w-[2220px] table-fixed border-separate border-spacing-0 text-left">
        <thead class="bg-[#343a40] text-white">
          <tr>
            <th class="h-[102px] w-[1399px] border-t-2 border-b-4 border-l-2 border-[#454d55] px-6 pt-1 font-bold tracking-[0.5px]">Requirement</th>
            <th class="border-x-2 border-t-2 border-b-4 border-[#454d55] px-6 pt-1 font-bold tracking-[0.1px]">Courses</th>
          </tr>
        </thead>
        <tbody class="leading-[48px]">
          <tr>
            <td class="h-[130px] border-b-2 border-l-2 border-[#dee2e6] px-6 pt-[25px] align-top whitespace-nowrap tracking-[-0.21px]">AGRICULTURAL BUSINESS AND ECONOMICS MAJOR REQUIREMENTS DEPARTMENT CORE</td>
            <td class="border-x-2 border-b-2 border-[#dee2e6] px-6 pt-[25px] align-top whitespace-nowrap tracking-[-0.23px]">AGBE 2317* Fundamentals of Agricultural Economics</td>
          </tr>
        </tbody>
      </table>
    </section>

    <div class="absolute inset-x-0 bottom-0 h-[60px] bg-linear-to-t from-black/9 to-transparent [mask-image:linear-gradient(to_right,transparent_20px,#000_160px,#000_3400px,transparent_3560px)]"></div>
    <div class="pointer-events-none absolute inset-x-0 top-0 h-[234px] rounded-t-[22px] border-2 border-b-0 border-[#66686b]"></div>
  </main>

  <!-- dock -->
  <nav class="ml-[89px] mt-[14px] flex h-[128px] w-[3407px] items-start gap-[26.5px] rounded-[38px] border-2 border-white/20 bg-[linear-gradient(to_right,#26261a_0%,#24231a_12%,#302817_21%,#27251a_28%,#2c2616_40%,#3a2b17_52%,#4b3416_65%,#523613_76%,#42301a_86%,#2f2a1b_93%,#26261c_100%)] bg-clip-padding pl-4 pt-[17px]">
    <!-- Finder -->
    <div class="flex w-20 flex-col items-center gap-[17px]"><svg class="size-20" viewBox="0 0 80 80"><g clip-path="url(#sq)"><rect width="80" height="80" fill="url(#gWhite)"/><path d="M0 0h44C37 15 34 30 34 46h12c0 12 1 24 4 34H0z" fill="url(#gFinder)"/></g><path d="M21 24v5M59 24v5" stroke="#1b2430" stroke-width="3.500" stroke-linecap="round"/><path d="M16 54c12 12 36 12 48 0" fill="none" stroke="#1b2430" stroke-width="3" stroke-linecap="round"/></svg><i class="size-2 rounded-full bg-[#b0af9f]"></i></div>
    <!-- Launchpad -->
    <svg class="size-20" viewBox="0 0 80 80"><rect width="80" height="80" rx="18" fill="#b6b5af"/><g><rect x="13" y="13" width="15" height="15" rx="4" fill="#76d35a"/><rect x="32.500" y="13" width="15" height="15" rx="4" fill="#f0b63e"/><rect x="52" y="13" width="15" height="15" rx="4" fill="#e58a36"/><rect x="13" y="33" width="15" height="15" rx="4" fill="#cf3327"/><rect x="32.500" y="33" width="15" height="15" rx="4" fill="#98a1a8"/><rect x="52" y="33" width="15" height="15" rx="4" fill="#e44a5c"/><rect x="13" y="52" width="15" height="15" rx="4" fill="#8c43cf"/><rect x="32.500" y="52" width="15" height="15" rx="4" fill="#3594ee"/><rect x="52" y="52" width="15" height="15" rx="4" fill="#66cba9"/></g></svg>
    <!-- Safari -->
    <svg class="size-20" viewBox="0 0 80 80"><rect width="80" height="80" rx="18" fill="url(#gWhite)"/><circle cx="40" cy="40" r="34" fill="url(#gSafari)"/><circle cx="40" cy="40" r="30" fill="none" stroke="#fff" stroke-width="4" stroke-dasharray="1 3.700" opacity=".75"/><path d="M64 20L44.500 45 36 36z" fill="#e8453c"/><path d="M16 60l20-24 8.500 9z" fill="#f4f4f6"/></svg>
    <!-- FaceTime -->
    <svg class="size-20" viewBox="0 0 80 80"><rect width="80" height="80" rx="18" fill="url(#gGreen)"/><rect x="12" y="23" width="38" height="35" rx="9" fill="url(#gCam)"/><path d="M53 37l10-10c2-2 4-1 4 1v24c0 2-2 3-4 1L53 43z" fill="url(#gCam)"/></svg>
    <!-- Maps -->
    <svg class="size-20" viewBox="0 0 80 80"><g clip-path="url(#sq)"><rect width="80" height="80" fill="#72cf71"/><path d="M0 14l80 66H0z" fill="#f1f1f3"/><path d="M0 36l20 16v28H0z" fill="#dd8bd0"/><path d="M44 80V62l26 18z" fill="#f4c842"/><path d="M18 0h26v80H18z" fill="#f1f1f3"/><path d="M23 0h16v50H23z" fill="#3b7df0"/><path d="M53 0c0 18 10 28 27 28" fill="none" stroke="#d6d7da" stroke-width="8"/></g><circle cx="31" cy="50" r="19" fill="#2f78ee" stroke="#f5f5f7" stroke-width="4"/><path d="M31 37l9 23-9-6-9 6z" fill="#fff"/></svg>
    <!-- Contacts -->
    <svg class="size-20 overflow-visible" viewBox="0 0 80 80"><rect x="70" y="12" width="12" height="14" rx="3" fill="#a9abae"/><rect x="70" y="27" width="12" height="14" rx="3" fill="#4da7e0"/><rect x="70" y="42" width="12" height="14" rx="3" fill="#ef9136"/><rect x="70" y="57" width="12" height="13" rx="3" fill="#58c356"/><rect width="78" height="80" rx="17" fill="url(#gBrown)"/><path d="M6 4v72" stroke="#8e6a3c" opacity=".6"/><g fill="#8f6a3b"><circle cx="41" cy="39" r="24" fill="none" stroke="#8a683b" stroke-width="1.500"/><circle cx="41" cy="34" r="8.500"/><path d="M22 53c5-7 33-7 38 0-9 13-29 13-38 0z"/></g></svg>
    <!-- Calendar -->
    <div class="flex size-20 flex-col overflow-hidden rounded-[18px] bg-[#f7f6f5] text-center"><div class="h-[25px] bg-[#df5549] pt-[2px] text-[16.5px] leading-[24px] font-bold tracking-[-0.3px] text-white">NOV</div><div class="text-[48px] leading-[50px] font-light text-[#222]">29</div></div>
    <!-- Reminders -->
    <div class="relative size-20"><svg class="size-20" viewBox="0 0 80 80"><rect width="80" height="80" rx="18" fill="#fbfaf9"/><path d="M30 20h40M30 40h41M30 60h41" stroke="#b9b9bb" stroke-width="1.500"/><g fill="none" stroke-width="1.500"><circle cx="16" cy="20" r="6.500" stroke="#2f78ee"/><circle cx="16" cy="40" r="6.500" stroke="#e24a3c"/><circle cx="16" cy="60" r="6.500" stroke="#ee9533"/></g><circle cx="16" cy="20" r="4.600" fill="#2f78ee"/><circle cx="16" cy="40" r="4.600" fill="#e24a3c"/><circle cx="16" cy="60" r="4.600" fill="#ee9533"/></svg><span class="absolute -top-[9px] left-[54px] flex size-[38px] items-center justify-center rounded-full bg-[#e04b3d] text-[20px] text-white">4</span></div>
    <!-- Notes -->
    <div class="flex w-20 flex-col items-center gap-[17px]"><svg class="size-20" viewBox="0 0 80 80"><g clip-path="url(#sq)"><rect width="80" height="80" fill="#f1f0ec"/><rect width="80" height="20" fill="url(#gNote)"/><path d="M0 21h80" stroke="#b6ab86" stroke-width="2"/><path d="M0 40h80M0 60h80" stroke="#cfcecb" stroke-width="1.500"/><path d="M2 25h78" stroke="#a5a5a3" stroke-dasharray="1.500 2"/></g></svg><i class="size-2 rounded-full bg-[#b0af9f]"></i></div>
    <!-- Freeform -->
    <svg class="size-20" viewBox="0 0 80 80"><rect width="80" height="80" rx="18" fill="#fff"/><circle cx="32" cy="48" r="22.500" fill="url(#gFree)"/><rect x="27" y="10" width="42" height="43" rx="4" fill="#5cc0e6"/><path d="M27 29a22 22 0 0 1 27 24H27z" fill="#5f8cc4"/><path d="M16 51c6-14 13-23 16-21 4 3-7 18-3 19 4 0 8-17 13-17 4 0-3 15 1 16 4 0 7-11 11-10 3 1 2 5 5 5 4-1 7-4 11-7" fill="none" stroke="#12364f" stroke-width="4" stroke-linecap="round"/></svg>
    <!-- Music -->
    <svg class="size-20" viewBox="0 0 80 80"><rect width="80" height="80" rx="18" fill="url(#gRed)"/><path d="M29 20l29-7v37c0 6-3 10-9 10-4 0-6-3-6-6 0-5 4-7 11-8V27l-21 5v25c0 6-3 9-9 9-4 0-7-2-7-6 0-5 4-7 12-8z" fill="#fff"/></svg>
    <!-- Podcasts -->
    <svg class="size-20" viewBox="0 0 80 80"><rect width="80" height="80" rx="18" fill="url(#gPod)"/><g fill="none" stroke="#fff" stroke-width="3.300" stroke-linecap="round"><path d="M28 61.500a27 27 0 1 1 24 0"/><path d="M29 49.500a17.500 17.500 0 1 1 22 0"/></g><circle cx="40" cy="35.500" r="6.500" fill="#fff"/><path d="M33 50c0-6 14-6 14 0l-2.500 17c-1 4-8 4-9 0z" fill="#fff"/></svg>
    <!-- TV -->
    <div class="flex w-20 flex-col items-center gap-[17px]"><div class="flex size-20 items-center justify-center rounded-[18px] bg-linear-to-b from-[#2b3432] to-[#0b0f10] pb-1 text-[33px] font-medium tracking-[-0.5px] text-white"><svg class="size-[28px]"><use href="#apple"/></svg>tv</div><i class="size-2 rounded-full bg-[#b5ad9a]"></i></div>
    <!-- News -->
    <svg class="size-20" viewBox="0 0 80 80"><rect width="80" height="80" rx="18" fill="#fff"/><path d="M16 17h16l31 46H47L16 36zM44 17h19v26zM16 44l20 19H16z" fill="#e2475c"/></svg>
    <!-- Numbers -->
    <svg class="size-20" viewBox="0 0 80 80"><rect width="80" height="80" rx="18" fill="url(#gNum)"/><g fill="#f0f4ee"><rect x="14" y="52" width="11" height="16" rx="2"/><rect x="28" y="38" width="11" height="30" rx="2"/><rect x="42" y="12" width="10" height="56" rx="2"/><rect x="55.500" y="27" width="10" height="41" rx="2"/></g></svg>
    <!-- Keynote -->
    <svg class="size-20" viewBox="0 0 80 80"><rect width="80" height="80" rx="18" fill="url(#gKey)"/><path d="M22 12h36c2 0 3 1 3 3l2 19c0 2-1 3-3 3H20c-2 0-3-1-3-3l2-19c0-2 1-3 3-3z" fill="#eef2f8"/><circle cx="40" cy="21" r="7" fill="#4f95ea"/><path d="M40 21v-7a7 7 0 0 1 6 10z" fill="#56bb5c"/><path d="M40 21l-6 4a7 7 0 0 1 6-11z" fill="#c9476a"/><path d="M22 31h36" stroke="#9aa7bb" stroke-width="2"/><path d="M40 37v30" stroke="#d7e0ee" stroke-width="3"/><rect x="28" y="65" width="24" height="4" rx="2" fill="#dfe6f2"/></svg>
    <!-- Pages -->
    <svg class="size-20" viewBox="0 0 80 80"><rect width="80" height="80" rx="18" fill="url(#gPages)"/><path d="M14 67h52" stroke="#fbd09a" stroke-width="2.500"/><path d="M14 67l3-12 41-38c4-3 7-1 6 3L48 37 20 63z" fill="#f4f2f0"/><path d="M14 67l3-7 3 3z" fill="#55504a"/><path d="M37 39l5 4" stroke="#b3aaa2" stroke-width="2"/></svg>
    <!-- App Store -->
    <svg class="size-20" viewBox="0 0 80 80"><rect width="80" height="80" rx="18" fill="url(#gStore)"/><g stroke="#f3f6fb" stroke-width="7" stroke-linecap="round"><path d="M43.500 19L27 49M37 19l24 42M15 49h49M21.500 59l1.500-2"/></g></svg>
    <!-- Settings -->
    <div class="relative size-20"><svg class="size-20" viewBox="0 0 80 80"><rect width="80" height="80" rx="18" fill="url(#gSet)"/><circle cx="40" cy="40" r="33" fill="#3b3d40"/><circle cx="40" cy="40" r="31.500" fill="none" stroke="#a2a4a6" stroke-width="4" stroke-dasharray="2 1.600"/><circle cx="40" cy="40" r="26" fill="none" stroke="#97999b" stroke-width="4.500"/><circle cx="40" cy="40" r="17" fill="none" stroke="#6d6f72" stroke-width="5" stroke-dasharray="2 1.500"/><g stroke="#a4a6a8" stroke-width="4.500"><path d="M40 40h25M40 40L27.500 18.500M40 40L27.500 61.500"/></g><circle cx="40" cy="40" r="4" fill="#55575a"/></svg><span class="absolute -top-[9px] left-[54px] flex size-[38px] items-center justify-center rounded-full bg-[#e04b3d] text-[20px] text-white">1</span></div>
    <!-- Printer utility -->
    <div class="flex w-20 flex-col items-center gap-[17px]"><svg class="size-20" viewBox="0 0 80 80"><rect width="80" height="80" rx="18" fill="#fff"/><g fill="none" stroke="#4f9bcb" stroke-width="2"><path d="M23 22v-6c0-2 1-3 3-3h22c2 0 3 1 3 3v6M62 33v-7c0-2-1-3-3-3H15c-2 0-3 1-3 3v21c0 2 1 3 3 3h4"/><path d="M16 30h5M19 38h27M23 38v22c0 2 1 3 3 3h20M30 47h15M30 54h15"/><rect x="50.500" y="38" width="17.500" height="28" rx="3.500"/><path d="M55 48h9M55 54h9M58 62h3"/></g></svg><i class="size-2 rounded-full bg-[#bfae92]"></i></div>
    <!-- Mail -->
    <div class="relative flex w-20 flex-col items-center gap-[17px]"><svg class="size-20" viewBox="0 0 80 80"><rect width="80" height="80" rx="18" fill="url(#gMail)"/><rect x="12" y="22" width="56" height="36" rx="3" fill="#e9e9e9"/><path d="M13 57l18-17M67 57L49 40" stroke="#a3a3a3" stroke-width="1.500"/><path d="M13 23l22 22c3 4 7 4 10 0l22-22z" fill="#f8f8f8" stroke="#9f9f9f" stroke-width="1.200"/></svg><i class="size-2 rounded-full bg-[#c8b08e]"></i><span class="absolute -top-2 left-[35px] flex h-[36px] w-[56px] items-center justify-center rounded-full bg-[#e04b3d] text-[20px] tracking-[-0.7px] text-white">1,778</span></div>
    <!-- Chrome -->
    <div class="flex w-20 flex-col items-center gap-[17px]"><svg class="size-20" viewBox="0 0 80 80"><rect width="80" height="80" rx="18" fill="#f1f0ef"/><circle cx="40" cy="40" r="34" fill="#f5c142"/><path d="M10.500 23A34 34 0 0 1 69.500 23H40L25 48z" fill="#d94f41"/><path d="M10.500 23A34 34 0 0 0 40 74l14.500-26L25 48z" fill="#4aa35a"/><path d="M69.500 23H40l14.500 26L40 74A34 34 0 0 0 69.500 23z" fill="#f5c142"/><circle cx="40" cy="40" r="16.500" fill="#fff"/><circle cx="40" cy="40" r="13.300" fill="#3b7ae8"/></svg><i class="size-2 rounded-full bg-[#cdb28c]"></i></div>
    <!-- Teams -->
    <svg class="size-20" viewBox="0 0 80 80"><rect width="80" height="80" rx="18" fill="#fff"/><circle cx="58" cy="24" r="6" fill="#4f56c0"/><path d="M54 33h12c1 0 2 1 2 2v12c0 13-12 13-14 9z" fill="#4f56c0"/><circle cx="41" cy="22" r="8" fill="#7b83eb"/><path d="M28 33h26c1 0 2 1 2 2v16c0 20-29 20-29 0z" fill="#7b83eb"/><rect x="10" y="25" width="29" height="30" rx="2.500" fill="#4349ae"/><text x="24.500" y="48" text-anchor="middle" font-size="22" font-weight="700" fill="#fff" font-family="Inter">T</text></svg>
    <i class="mx-[9px] -mt-[3px] h-24 w-[2px] bg-white/30"></i>
    <!-- VS Code -->
    <div class="flex w-20 flex-col items-center gap-[17px]"><svg class="size-20" viewBox="0 0 80 80"><rect width="80" height="80" rx="18" fill="#fff"/><path d="M52 13v16L19 54c-1 1-2 1-3 0l-4-4c-1-1-1-2 0-3z" fill="#2565a9"/><path d="M52 67V51L19 26c-1-1-2-1-3 0l-4 4c-1 1-1 2 0 3z" fill="#3179c6"/><path d="M52 12l13 6c2 1 2 2 2 4v36c0 2 0 3-2 4l-13 6c-1 0-2 0-3-2 1 1 3 0 3-2V16c0-2-2-3-3-2 1-2 2-2 3-2z" fill="#3f9ae8"/></svg><i class="size-2 rounded-full bg-[#d4b68f]"></i></div>
    <!-- Excel -->
    <div class="flex w-20 flex-col items-center gap-[17px]"><svg class="size-20" viewBox="0 0 80 80"><rect width="80" height="80" rx="18" fill="#fff"/><rect x="21" y="13" width="45" height="53" rx="3" fill="#2e6a44"/><path d="M21 16a3 3 0 0 1 3-3h20v14H21z" fill="#4a9c69"/><path d="M44 13h19a3 3 0 0 1 3 3v11H44z" fill="#62b983"/><path d="M21 27h23v13H21z" fill="#35794f"/><path d="M44 27h22v13H44z" fill="#4a9c69"/><path d="M44 40h22v13H44z" fill="#35794f"/><rect x="7" y="25" width="30" height="30" rx="2.500" fill="#2c7a48"/><text x="22" y="48" text-anchor="middle" font-size="22" font-weight="700" fill="#fff" font-family="Inter">X</text></svg><i class="size-2 rounded-full bg-[#cdb28f]"></i></div>
    <!-- Terminal -->
    <div class="flex w-20 flex-col items-center gap-[17px]"><svg class="size-20" viewBox="0 0 80 80"><rect width="80" height="80" rx="18" fill="#9b9fa3"/><rect x="3" y="3" width="74" height="74" rx="15.500" fill="#000"/><rect x="8.500" y="8.500" width="63" height="63" rx="10" fill="#232323"/><path d="M14 15l9 5.500-9 5.500M27 30h11" fill="none" stroke="#fff" stroke-width="2.800"/></svg><i class="size-2 rounded-full bg-[#bda98a]"></i></div>
    <!-- Acrobat -->
    <div class="flex w-20 flex-col items-center gap-[17px]"><svg class="size-20" viewBox="0 0 80 80"><rect width="80" height="80" rx="18" fill="#a32417"/><path d="M38 17c-5 0-3 10 2 19 5 8 13 17 20 18 6 0 6-7-2-8-11-2-27 4-36 9-7 4-6 10-2 9 8-2 18-21 20-33 1-8 1-14-2-14z" fill="none" stroke="#fff" stroke-width="3.600"/></svg><i class="size-2 rounded-full bg-[#b8a78c]"></i></div>
    <!-- Keychain -->
    <div class="flex w-20 flex-col items-center gap-[17px]"><svg class="size-20" viewBox="0 0 80 80"><rect width="80" height="80" rx="18" fill="url(#gDark)"/><circle cx="41" cy="16" r="10.500" fill="none" stroke="#8d8377" stroke-width="2.500"/><path d="M16 56h7l2 14-4 2-4-6z" fill="#9c9790"/><path d="M45 24c6-3 12 0 13 6 1 5-1 8-2 10l6 26-5 5-9-30z" fill="#a7b0b4"/><path d="M31 30c3-6 11-6 14-1s1 12-1 15v27l-5 4-4-4V44z" fill="#b9bfc2"/><path d="M54 46l5 22M40 46v24" stroke="#6f6c68" stroke-width="1.500"/><circle cx="23" cy="43" r="16.500" fill="#ee8a2c" stroke="#e8c9a0" stroke-width="1"/><path d="M15 40l12 3-3 11-10-3z" fill="#fff"/><path d="M26 43c1-6 8-5 7 0l-1 4" fill="none" stroke="#fff" stroke-width="2"/></svg><i class="size-2 rounded-full bg-[#b4a790]"></i></div>
    <!-- Preview -->
    <div class="flex w-20 flex-col items-center gap-[17px]"><svg class="size-20 overflow-visible" viewBox="0 0 80 80"><rect width="79" height="80" rx="18" fill="#f2f1f4"/><rect x="6" y="6" width="67" height="68" rx="12" fill="url(#gSky)"/><path d="M6 43h67v19c0 8-5 12-12 12H18c-7 0-12-4-12-12z" fill="#34558f"/><path d="M6 56l10-4 8 5 10-3 8 8v12H18c-7 0-12-4-12-12z" fill="#e4e8ec"/><path d="M6 50l14 3-6 4-8-1zM26 63l10-4 6 10H28z" fill="#7b6a58"/><path d="M43 50h31l7 29c0 3-2 5-5 5H40c-3 0-5-2-5-5z" fill="#c9ccd0" stroke="#8d8f92" stroke-width="1.500"/><path d="M47 56h22l5 20H42z" fill="#eceef0"/><path d="M50 62l8-3 7 8-8 6z" fill="#7a7f88"/><path d="M41 43c0-6 35-6 35 0v11c0 3-35 3-35 0z" fill="#0c0c0c"/><ellipse cx="58.500" cy="42" rx="17" ry="3.500" fill="#3b3b3b"/></svg><i class="size-2 rounded-full bg-[#b0a692]"></i></div>
    <i class="mx-[9px] -mt-[3px] h-24 w-[2px] bg-white/30"></i>
    <!-- ZIP archive -->
    <svg class="size-20 overflow-visible" viewBox="0 0 80 80"><path d="M8 4h66v5h4v50H4V11h4z" fill="#e9eaeb"/><path d="M6 14h5v40H6zM71 14h4v40h-4z" fill="#4b6570"/><path d="M10 4h38l22 24v55a2 2 0 0 1-2 2H12a2 2 0 0 1-2-2z" fill="#f7f7f8"/><path d="M50 5h20v23z" fill="#3f444a"/><path d="M48 4c3 8 2 15 1 24 7-3 14-3 21 0z" fill="#dadbdd"/><path d="M40 5v43" stroke="#4a4c50" stroke-width="10"/><path d="M40 5v43" stroke="#c6c8cb" stroke-width="6" stroke-dasharray="1.500 2"/><rect x="37" y="14" width="7" height="18" rx="3" fill="#9da1a7"/><text x="41" y="78" text-anchor="middle" font-size="12" fill="#6a6b6e" font-family="Inter">ZIP</text></svg>
    <!-- Trash -->
    <svg class="size-20 overflow-visible" viewBox="0 0 80 80"><path d="M6 4h68l-8 73c-2 9-50 9-52 0z" fill="url(#gCan)"/><ellipse cx="40" cy="5" rx="34" ry="8" fill="#6d6f72" stroke="#a4a6a8" stroke-width="1.500"/><path d="M10 4l6-11 10 4 4-5 10 8 8-8 8 8 6-3 8 7-6 8-12 1-8 1-12 0-10-2z" fill="#e7e8ea"/><path d="M24 2l8 4-2 4-8-3zM44 0l8 2-1 7-9-2zM54-3l6 4-3 3z" fill="#3a4b6b"/><path d="M33-1l5 4-4 3zM48 5l5 2-4 4z" fill="#c8723c"/><path d="M18-2l5 4-6 4z" fill="#8f9499"/></svg>
  </nav>
</div>
</body>
</html>
